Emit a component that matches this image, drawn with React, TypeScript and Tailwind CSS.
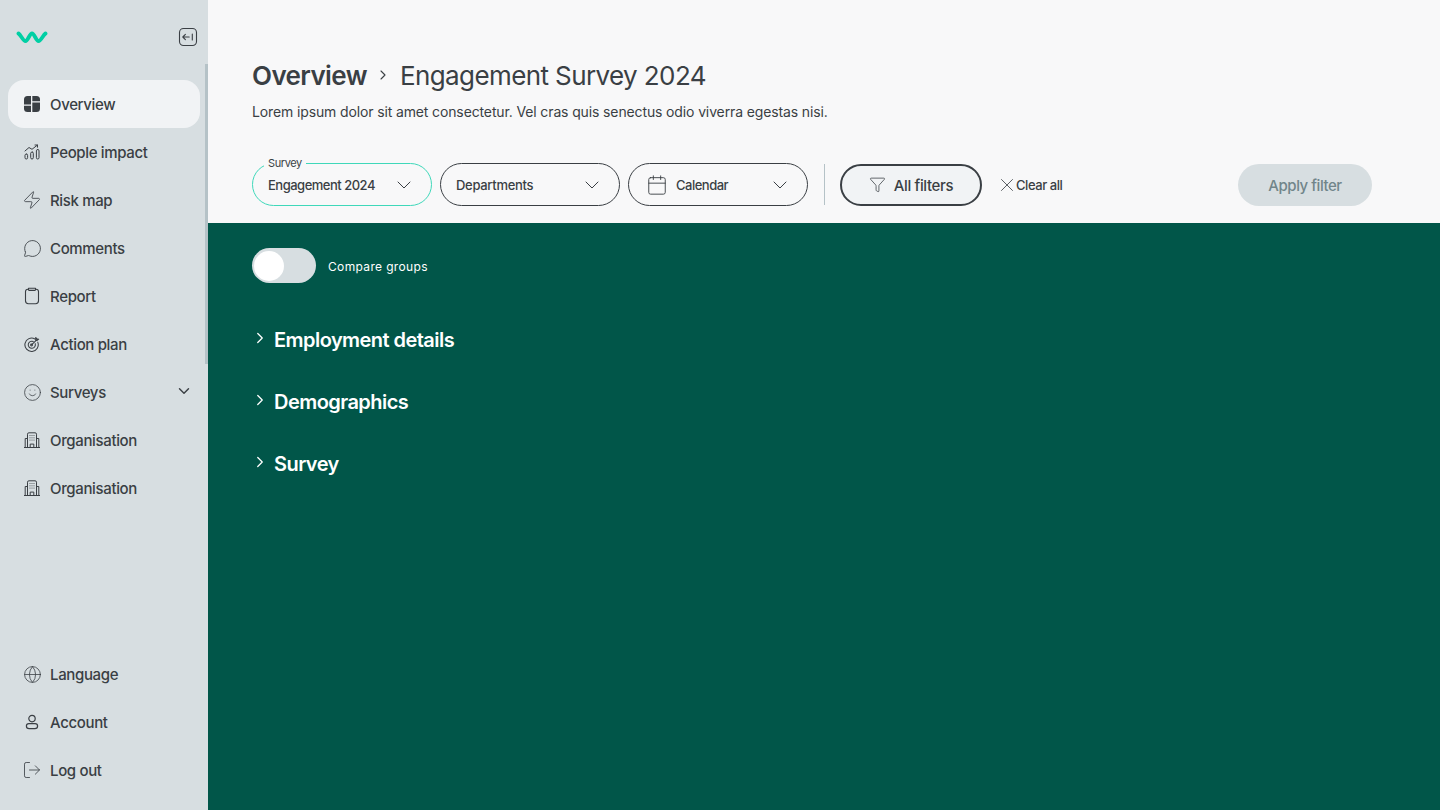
import { ChevronDown, ChevronRight, Calendar, Funnel, X, Globe, LogOut, Smile, Zap, MessageCircle } from 'lucide-react';
import type { ReactNode } from 'react';

const font = { fontFamily: 'Inter, sans-serif' };

const Logo = () => (
  <svg width="32" height="14" viewBox="0 0 32 14" fill="none">
    <path d="M2.5 3.5 C5 5 7 11 9.5 11 C12 11 13.5 3.5 16 3.5 C18.5 3.5 20 11 22.5 11 C25 11 27 5 29.5 3.5" stroke="#00CFA4" strokeWidth="3.8" strokeLinecap="round" />
  </svg>
);

const CollapseIcon = () => (
  <svg width="20" height="20" viewBox="0 0 20 20" fill="none" stroke="#3A3F44" strokeWidth="1.1" strokeLinecap="round" strokeLinejoin="round">
    <rect x="1.5" y="1.5" width="17" height="17" rx="4" />
    <path d="M4.8 10h6.4M7.4 7.4 4.8 10l2.6 2.6M14.3 7v6" />
  </svg>
);

const OverviewIcon = () => (
  <svg width="16" height="16" viewBox="0 0 16 16" fill="#3A3F44">
    <path d="M3.5 0H7v8.5H0V3.5A3.5 3.5 0 0 1 3.5 0Z" />
    <path d="M8.3 0h4.2A3.5 3.5 0 0 1 16 3.5v1.7H8.3Z" />
    <path d="M8.3 6.5H16v6A3.5 3.5 0 0 1 12.5 16H8.3Z" />
    <path d="M0 9.8h7V16H3.5A3.5 3.5 0 0 1 0 12.5Z" />
  </svg>
);

const ImpactIcon = () => (
  <svg width="16" height="16" viewBox="0 0 16 16" fill="none" stroke="#3A3F44" strokeWidth="1" strokeLinecap="round" strokeLinejoin="round">
    <rect x="1" y="10" width="2.6" height="5" rx="1.3" />
    <rect x="6.7" y="8" width="2.6" height="7" rx="1.3" />
    <rect x="12.4" y="5.5" width="2.6" height="9.5" rx="1.3" />
    <path d="M1 7 5 3.5l3 1.8L13.5 1M11 1h2.5v2.2" />
  </svg>
);

const ReportIcon = () => (
  <svg width="16" height="18" viewBox="0 0 16 18" fill="none" stroke="#3A3F44" strokeWidth="1.1" strokeLinecap="round" strokeLinejoin="round">
    <path d="M4.5 2.2H3.9A2.4 2.4 0 0 0 1.5 4.6v9.2a2.9 2.9 0 0 0 2.9 2.9h7.2a2.9 2.9 0 0 0 2.9-2.9V4.6a2.4 2.4 0 0 0-2.4-2.4h-.6" />
    <path d="M4.5 1.2h7v1.6a.6.6 0 0 1-.6.6H5.1a.6.6 0 0 1-.6-.6Z" />
  </svg>
);

const TargetIcon = () => (
  <svg width="17" height="17" viewBox="0 0 17 17" fill="none" stroke="#3A3F44" strokeWidth="1.1" strokeLinecap="round" strokeLinejoin="round">
    <path d="M11.6 2.6A7.1 7.1 0 1 0 14.6 6" />
    <path d="M9.8 5.3A3.8 3.8 0 1 0 11.9 7.6" />
    <circle cx="8" cy="9" r="1" />
    <path d="M8 9 14 3M12.4 2.8V1l1.2 1.4L15.6 2.8 14 4.2h-1.6Z" />
  </svg>
);

const BuildingIcon = () => (
  <svg width="16" height="16" viewBox="0 0 16 16" fill="none" stroke="#3A3F44" strokeWidth="1" strokeLinecap="round" strokeLinejoin="round">
    <path d="M0.3 15.5h15.4M3.5 15.5V2.2A1.4 1.4 0 0 1 4.9.8h6.2a1.4 1.4 0 0 1 1.4 1.4v13.3M1.2 15.5V6.5h2.3M14.8 15.5V6.5h-2.3" />
    <path d="M6.2 15.5v-3.4h3.6v3.4M6 3.5h.01M8 3.5h.01M10 3.5h.01M6 5.8h.01M8 5.8h.01M10 5.8h.01M6 8.1h.01M8 8.1h.01M10 8.1h.01" />
  </svg>
);

const AccountIcon = () => (
  <svg width="16" height="16" viewBox="0 0 16 16" fill="none" stroke="#3A3F44" strokeWidth="1.2" strokeLinecap="round" strokeLinejoin="round">
    <circle cx="8" cy="4.6" r="3.2" />
    <path d="M4.9 9.6h6.2a2.5 2.5 0 0 1 2.5 2.5c0 1.6-1.2 2.6-2.7 2.6H5.1c-1.5 0-2.7-1-2.7-2.6a2.5 2.5 0 0 1 2.5-2.5Z" />
  </svg>
);

const NavItem = ({ icon, label, active, caret }: { icon: ReactNode; label: string; active?: boolean; caret?: boolean }) => (
  <div className={`flex h-12 items-center rounded-2xl pl-4 pr-[7px] ${active ? 'bg-[#F1F3F5]' : ''}`}>
    <span className="flex w-4 shrink-0 items-center justify-center">{icon}</span>
    <span className="ml-[10px] flex-1 pt-[2px] text-[15px] font-medium tracking-[-0.35px] text-[#3A3F44]">{label}</span>
    {caret && <ChevronDown size={18} strokeWidth={1.9} className="-mt-0.5 text-[#3A3F44]" />}
  </div>
);

const Select = ({ label, value, icon, focus }: { label?: string; value: string; icon?: ReactNode; focus?: boolean }) => (
  <div className={`relative flex h-[43px] w-[180px] items-center rounded-full pr-[15px] ${icon ? 'pl-[17px]' : 'pl-[15px]'} ${focus ? 'border-[1.5px] border-[#3FD8BA]' : 'border border-[#3A3F44]'}`}>
    {label && <span className="absolute -top-[7px] left-[11px] bg-[#F8F8F9] px-1 text-[11px] leading-[13px] tracking-[-0.4px] text-[#3A3F44]">{label}</span>}
    {icon}
    <span className={`flex-1 pt-[2px] text-[13px] font-medium text-[#3A3F44] ${icon ? 'ml-2' : ''} ${icon || focus ? 'tracking-[-0.5px]' : 'tracking-[-0.3px]'}`}>{value}</span>
    <ChevronDown size={24} strokeWidth={1} className="text-[#3A3F44]" />
  </div>
);

const Section = ({ title }: { title: string }) => (
  <div className="flex h-[62px] items-center">
    <ChevronRight size={18} strokeWidth={1.7} className="-ml-[2px] -mt-0.5 text-white" />
    <span className="ml-[5px] pt-px text-[20px] font-semibold tracking-[-0.55px] text-white">{title}</span>
  </div>
);

export default function App() {
  return (
    <div className="flex h-[810px] w-[1440px] overflow-hidden" style={font}>
      <aside className="relative flex w-[208px] shrink-0 flex-col bg-[#D7DEE1]">
        <div className="absolute right-0 top-16 h-[300px] w-[3px] bg-[#B5C2C7]" />
        <div className="flex h-20 items-center justify-between pl-4 pr-[10px] pb-[6px]">
          <Logo />
          <CollapseIcon />
        </div>
        <nav className="flex flex-col px-2">
          <NavItem active icon={<OverviewIcon />} label="Overview" />
          <NavItem icon={<ImpactIcon />} label="People impact" />
          <NavItem icon={<Zap size={20} strokeWidth={1} className="shrink-0 text-[#3A3F44]" />} label="Risk map" />
          <NavItem icon={<MessageCircle size={19} strokeWidth={1.1} className="shrink-0 text-[#3A3F44]" />} label="Comments" />
          <NavItem icon={<ReportIcon />} label="Report" />
          <NavItem icon={<TargetIcon />} label="Action plan" />
          <NavItem caret icon={<Smile size={19} strokeWidth={1} className="shrink-0 text-[#3A3F44]" />} label="Surveys" />
          <NavItem icon={<BuildingIcon />} label="Organisation" />
          <NavItem icon={<BuildingIcon />} label="Organisation" />
        </nav>
        <div className="mt-auto flex flex-col px-2 pb-4">
          <NavItem icon={<Globe size={19} strokeWidth={1} className="shrink-0 text-[#3A3F44]" />} label="Language" />
          <NavItem icon={<AccountIcon />} label="Account" />
          <NavItem icon={<LogOut size={20} strokeWidth={1} className="shrink-0 text-[#3A3F44]" />} label="Log out" />
        </div>
      </aside>
      <main className="flex flex-1 flex-col bg-[#015649]">
        <header className="h-[223px] bg-[#F8F8F9] pl-11 pr-[68px] pt-[57px]">
          <div className="flex h-9 items-center text-[26px] tracking-[-0.6px] text-[#3A3F44]">
            <span className="font-semibold">Overview</span>
            <ChevronRight size={16} strokeWidth={1.6} className="ml-2 mr-[9px]" />
            <span className="font-normal">Engagement Survey 2024</span>
          </div>
          <p className="mt-[9px] text-[14px] leading-5 tracking-[-0.13px] text-[#3A3F44]">
            Lorem ipsum dolor sit amet consectetur. Vel cras quis senectus odio viverra egestas nisi.
          </p>
          <div className="mt-[41px] flex items-center">
            <div className="flex gap-2">
              <Select focus label="Survey" value="Engagement 2024" />
              <Select value="Departments" />
              <Select value="Calendar" icon={<Calendar size={22} strokeWidth={1} className="text-[#3A3F44]" />} />
            </div>
            <div className="ml-4 h-[41px] w-px bg-[#B5C2C7]" />
            <button className="ml-[15px] flex h-[42px] w-[142px] items-center justify-center rounded-full border-2 border-[#3A3F44] bg-[#F1F3F5] text-[15px] font-medium tracking-[-0.35px] text-[#3A3F44]">
              <Funnel size={17} strokeWidth={1.1} className="mr-2" />
              <span className="pt-[3px]">All filters</span>
            </button>
            <button className="ml-[14px] flex items-center text-[13px] font-medium tracking-[-0.45px] text-[#3A3F44]">
              <X size={22} strokeWidth={0.9} className="-mr-[2px]" />
              <span className="pt-[2px]">Clear all</span>
            </button>
            <button className="ml-auto h-[42px] w-[134px] rounded-full bg-[#D7DEE1] pt-[3px] text-[15px] font-medium tracking-[-0.45px] text-[#71858A]">
              Apply filter
            </button>
          </div>
        </header>
        <section className="pl-11 pt-[25px]">
          <div className="flex items-center">
            <div className="flex h-[35px] w-16 items-center rounded-full bg-[#D7DEE1] pl-[2px]">
              <div className="h-[30px] w-[30px] rounded-full bg-white" />
            </div>
            <span className="ml-3 pt-[3px] text-[12px] tracking-[0.35px] text-white">Compare groups</span>
          </div>
          <div className="mt-[25px] flex flex-col pl-[1px]">
            <Section title="Employment details" />
            <Section title="Demographics" />
            <Section title="Survey" />
          </div>
        </section>
      </main>
    </div>
  );
}
